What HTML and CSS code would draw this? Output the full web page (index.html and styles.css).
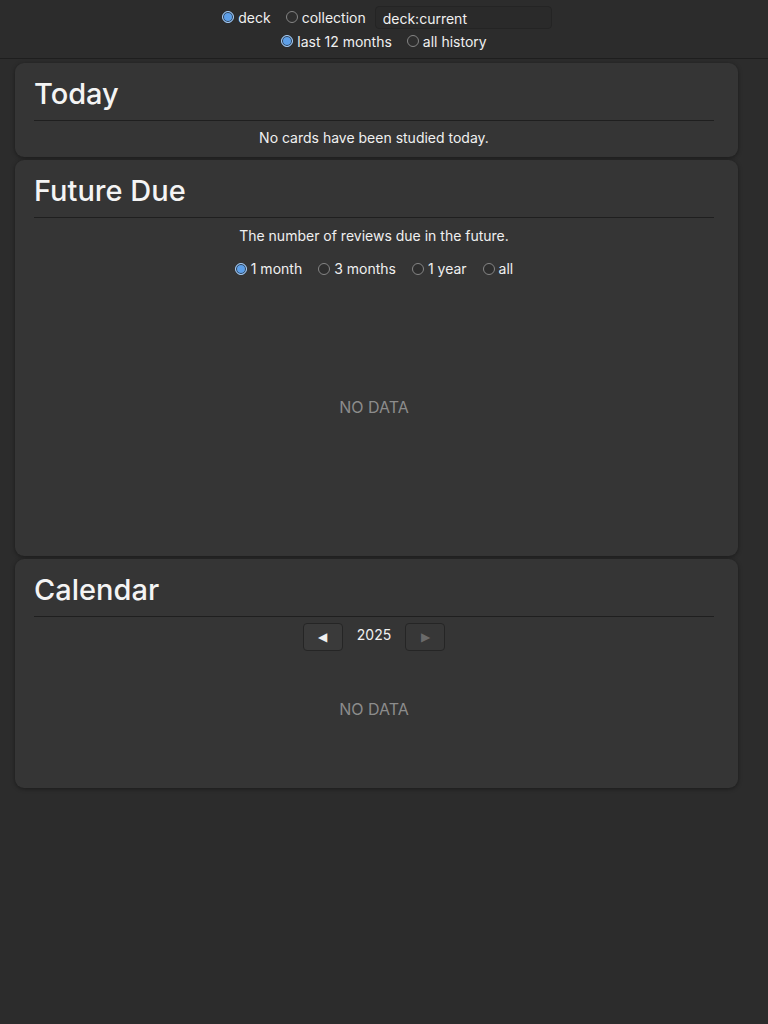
FILE: index.html
```html
<!DOCTYPE html>
<html>
<head>
  <title>Statistics</title>
  <link rel="stylesheet" href="styles.css">
</head>
<body>
  <div class="top-bar">
    <div class="top-row top-row-search">
      <label class="radio-item"><input type="radio" name="scope" checked> deck</label>
      <label class="radio-item"><input type="radio" name="scope"> collection</label>
      <input class="search" type="text" value="deck:current">
    </div>
    <div class="top-row">
      <label class="radio-item"><input type="radio" name="range" checked> last 12 months</label>
      <label class="radio-item"><input type="radio" name="range"> all history</label>
    </div>
  </div>

  <div class="cards">
    <div class="card card-today">
      <h1 class="card-title">Today</h1>
      <div class="card-text">No cards have been studied today.</div>
    </div>

    <div class="card card-future">
      <h1 class="card-title">Future Due</h1>
      <div class="card-text">The number of reviews due in the future.</div>
      <div class="range-row">
        <label class="radio-item"><input type="radio" name="future" checked>1 month</label>
        <label class="radio-item"><input type="radio" name="future">3 months</label>
        <label class="radio-item"><input type="radio" name="future">1 year</label>
        <label class="radio-item"><input type="radio" name="future">all</label>
      </div>
      <div class="no-data future-empty">NO DATA</div>
    </div>

    <div class="card card-calendar">
      <h1 class="card-title">Calendar</h1>
      <div class="year-nav">
        <button class="nav-btn">&#9664;</button>
        <span class="year">2025</span>
        <button class="nav-btn" disabled>&#9654;</button>
      </div>
      <div class="no-data calendar-empty">NO DATA</div>
    </div>
  </div>
</body>
</html>
```

FILE: styles.css
```css
body {
  margin: 0;
  background-color: #2c2c2c;
  color: #f0f0f0;
  font-family: Inter, "Noto Sans", sans-serif;
  font-size: 14px;
  height: 1024px;
}

.top-bar {
  height: 59px;
  border-bottom: 1px solid #1e1e1e;
  display: flex;
  flex-direction: column;
  align-items: center;
  padding-top: 5px;
  box-sizing: border-box;
}

.top-row {
  display: flex;
  align-items: center;
  gap: 15px;
  height: 24px;
}

.top-row-search {
  margin-left: 6px;
}

.radio-item {
  display: flex;
  align-items: center;
  gap: 4px;
  font-size: 14px;
  color: #f0f0f0;
}

input[type="radio"] {
  appearance: none;
  -webkit-appearance: none;
  width: 12px;
  height: 12px;
  margin: 0;
  border-radius: 50%;
  border: 1px solid #858585;
  background-color: #2e2e2e;
  box-sizing: border-box;
}

input[type="radio"]:checked {
  border: 1.5px solid #a9cdf4;
  background-color: #5d9fe8;
  box-shadow: inset 0 0 0 1px #2a3a4c;
}

.search {
  width: 177px;
  height: 23px;
  box-sizing: border-box;
  margin-left: -6px;
  background-color: #2a2a2a;
  border: 1px solid #242424;
  border-radius: 4px;
  color: #f0f0f0;
  font-family: Inter, "Noto Sans", sans-serif;
  font-size: 14px;
  padding: 2px 7px 0;
}

.cards {
  display: flex;
  flex-direction: column;
  gap: 3px;
  padding: 4px 30px 0 15px;
}

.card {
  background-color: #353535;
  border-radius: 9px;
  box-shadow: 0 1px 4px rgba(0, 0, 0, 0.4);
  padding: 13px 24px 0 19px;
  box-sizing: border-box;
}

.card-title {
  margin: 0;
  font-size: 29px;
  font-weight: 500;
  line-height: 36px;
  padding-bottom: 8px;
  border-bottom: 1px solid #1f1f1f;
  color: #f4f4f4;
}

.card-text {
  text-align: center;
  font-size: 14px;
  margin-top: 8px;
}

.card-today {
  height: 94px;
}

.card-future {
  height: 396px;
}

.card-future .card-text {
  margin-top: 9px;
}

.card-calendar {
  height: 229px;
}

.range-row {
  display: flex;
  justify-content: center;
  gap: 16px;
  margin-top: 16px;
}

.no-data {
  text-align: center;
  font-size: 16px;
  color: #8c8c8c;
}

.future-empty {
  margin-top: 120px;
}

.year-nav {
  display: flex;
  justify-content: center;
  align-items: center;
  gap: 14px;
  margin-top: 6px;
}

.year {
  font-size: 14px;
  margin-top: -6px;
}

.nav-btn {
  width: 40px;
  height: 28px;
  background-color: #3a3a3a;
  border: 1px solid #252525;
  border-radius: 4px;
  color: #f0f0f0;
  font-size: 12px;
  padding: 0;
}

.nav-btn:disabled {
  color: #6a6a6a;
  background-color: #373737;
}

.calendar-empty {
  margin-top: 48px;
}
```
